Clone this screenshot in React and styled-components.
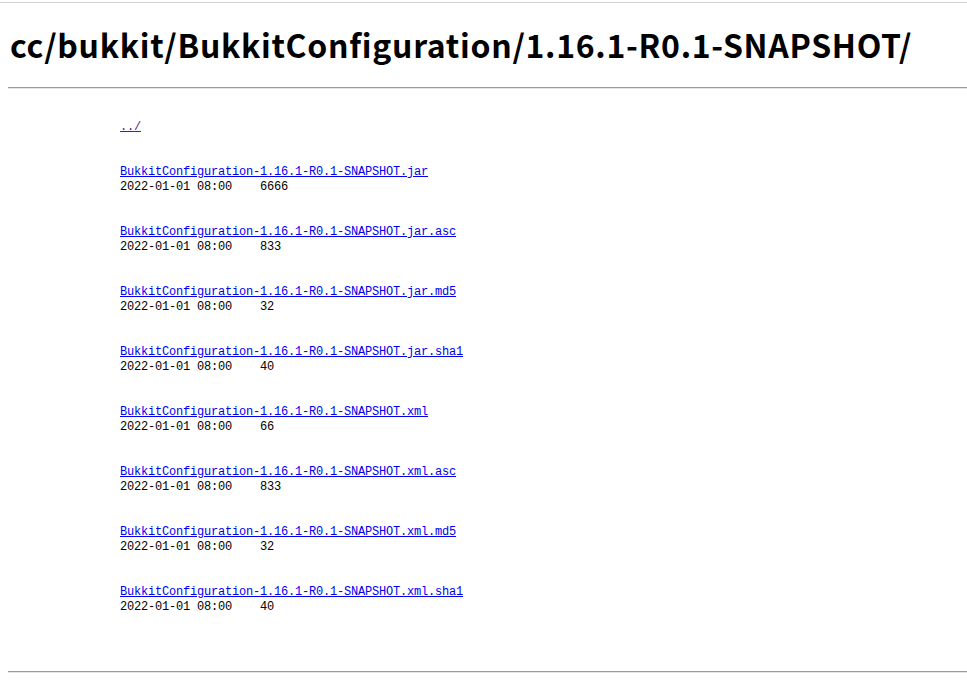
import styled, { createGlobalStyle } from 'styled-components';

const GlobalStyle = createGlobalStyle`
  html, body {
    margin: 0;
    background: #fff;
  }
`;

const TopRule = styled.div`
  margin-top: 2px;
  height: 1px;
  background: #d0d0d0;
`;

const Page = styled.div`
  padding-left: 8px;
`;

const Title = styled.h1`
  margin: 23px 0 24px 2px;
  font-family: "Noto Sans CJK SC", "Noto Sans", sans-serif;
  font-size: 32px;
  line-height: 37px;
  letter-spacing: 0.7px;
  font-weight: 700;
  color: #000;
`;

const Rule = styled.hr`
  margin: 0;
  height: 0;
  border: none;
  border-top: 1px solid #9a9a9a;
  border-bottom: 1px solid #e6e6e6;
`;

const Listing = styled.div`
  margin: ${(p) => p.$top}px 0 ${(p) => p.$bottom}px;
  padding-left: 112px;
  font-family: "Liberation Mono", monospace;
  font-size: 12px;
  letter-spacing: -0.2px;
  line-height: 15px;
  white-space: pre;
  color: #000;
`;

const Entry = styled.div`
  margin-top: 30px;
`;

const Link = styled.a`
  color: ${(p) => (p.$visited ? '#551a8b' : '#0000ee')};
  text-decoration: underline;
  display: inline-block;
`;

const Meta = styled.div``;

const files = [
  ['BukkitConfiguration-1.16.1-R0.1-SNAPSHOT.jar', '6666'],
  ['BukkitConfiguration-1.16.1-R0.1-SNAPSHOT.jar.asc', '833'],
  ['BukkitConfiguration-1.16.1-R0.1-SNAPSHOT.jar.md5', '32'],
  ['BukkitConfiguration-1.16.1-R0.1-SNAPSHOT.jar.sha1', '40'],
  ['BukkitConfiguration-1.16.1-R0.1-SNAPSHOT.xml', '66'],
  ['BukkitConfiguration-1.16.1-R0.1-SNAPSHOT.xml.asc', '833'],
  ['BukkitConfiguration-1.16.1-R0.1-SNAPSHOT.xml.md5', '32'],
  ['BukkitConfiguration-1.16.1-R0.1-SNAPSHOT.xml.sha1', '40'],
];

const App = () => (
  <>
    <GlobalStyle />
    <TopRule />
    <Page>
      <Title>cc/bukkit/BukkitConfiguration/1.16.1-R0.1-SNAPSHOT/</Title>
      <Rule />
      <Listing $top={31} $bottom={56}>
        <Link href="#" $visited>../</Link>
        {files.map(([name, size]) => (
          <Entry key={name}>
            <Link href="#">{name}</Link>
            <Meta>{`2022-01-01 08:00    ${size}`}</Meta>
          </Entry>
        ))}
      </Listing>
      <Rule />
    </Page>
  </>
);

export default App;
